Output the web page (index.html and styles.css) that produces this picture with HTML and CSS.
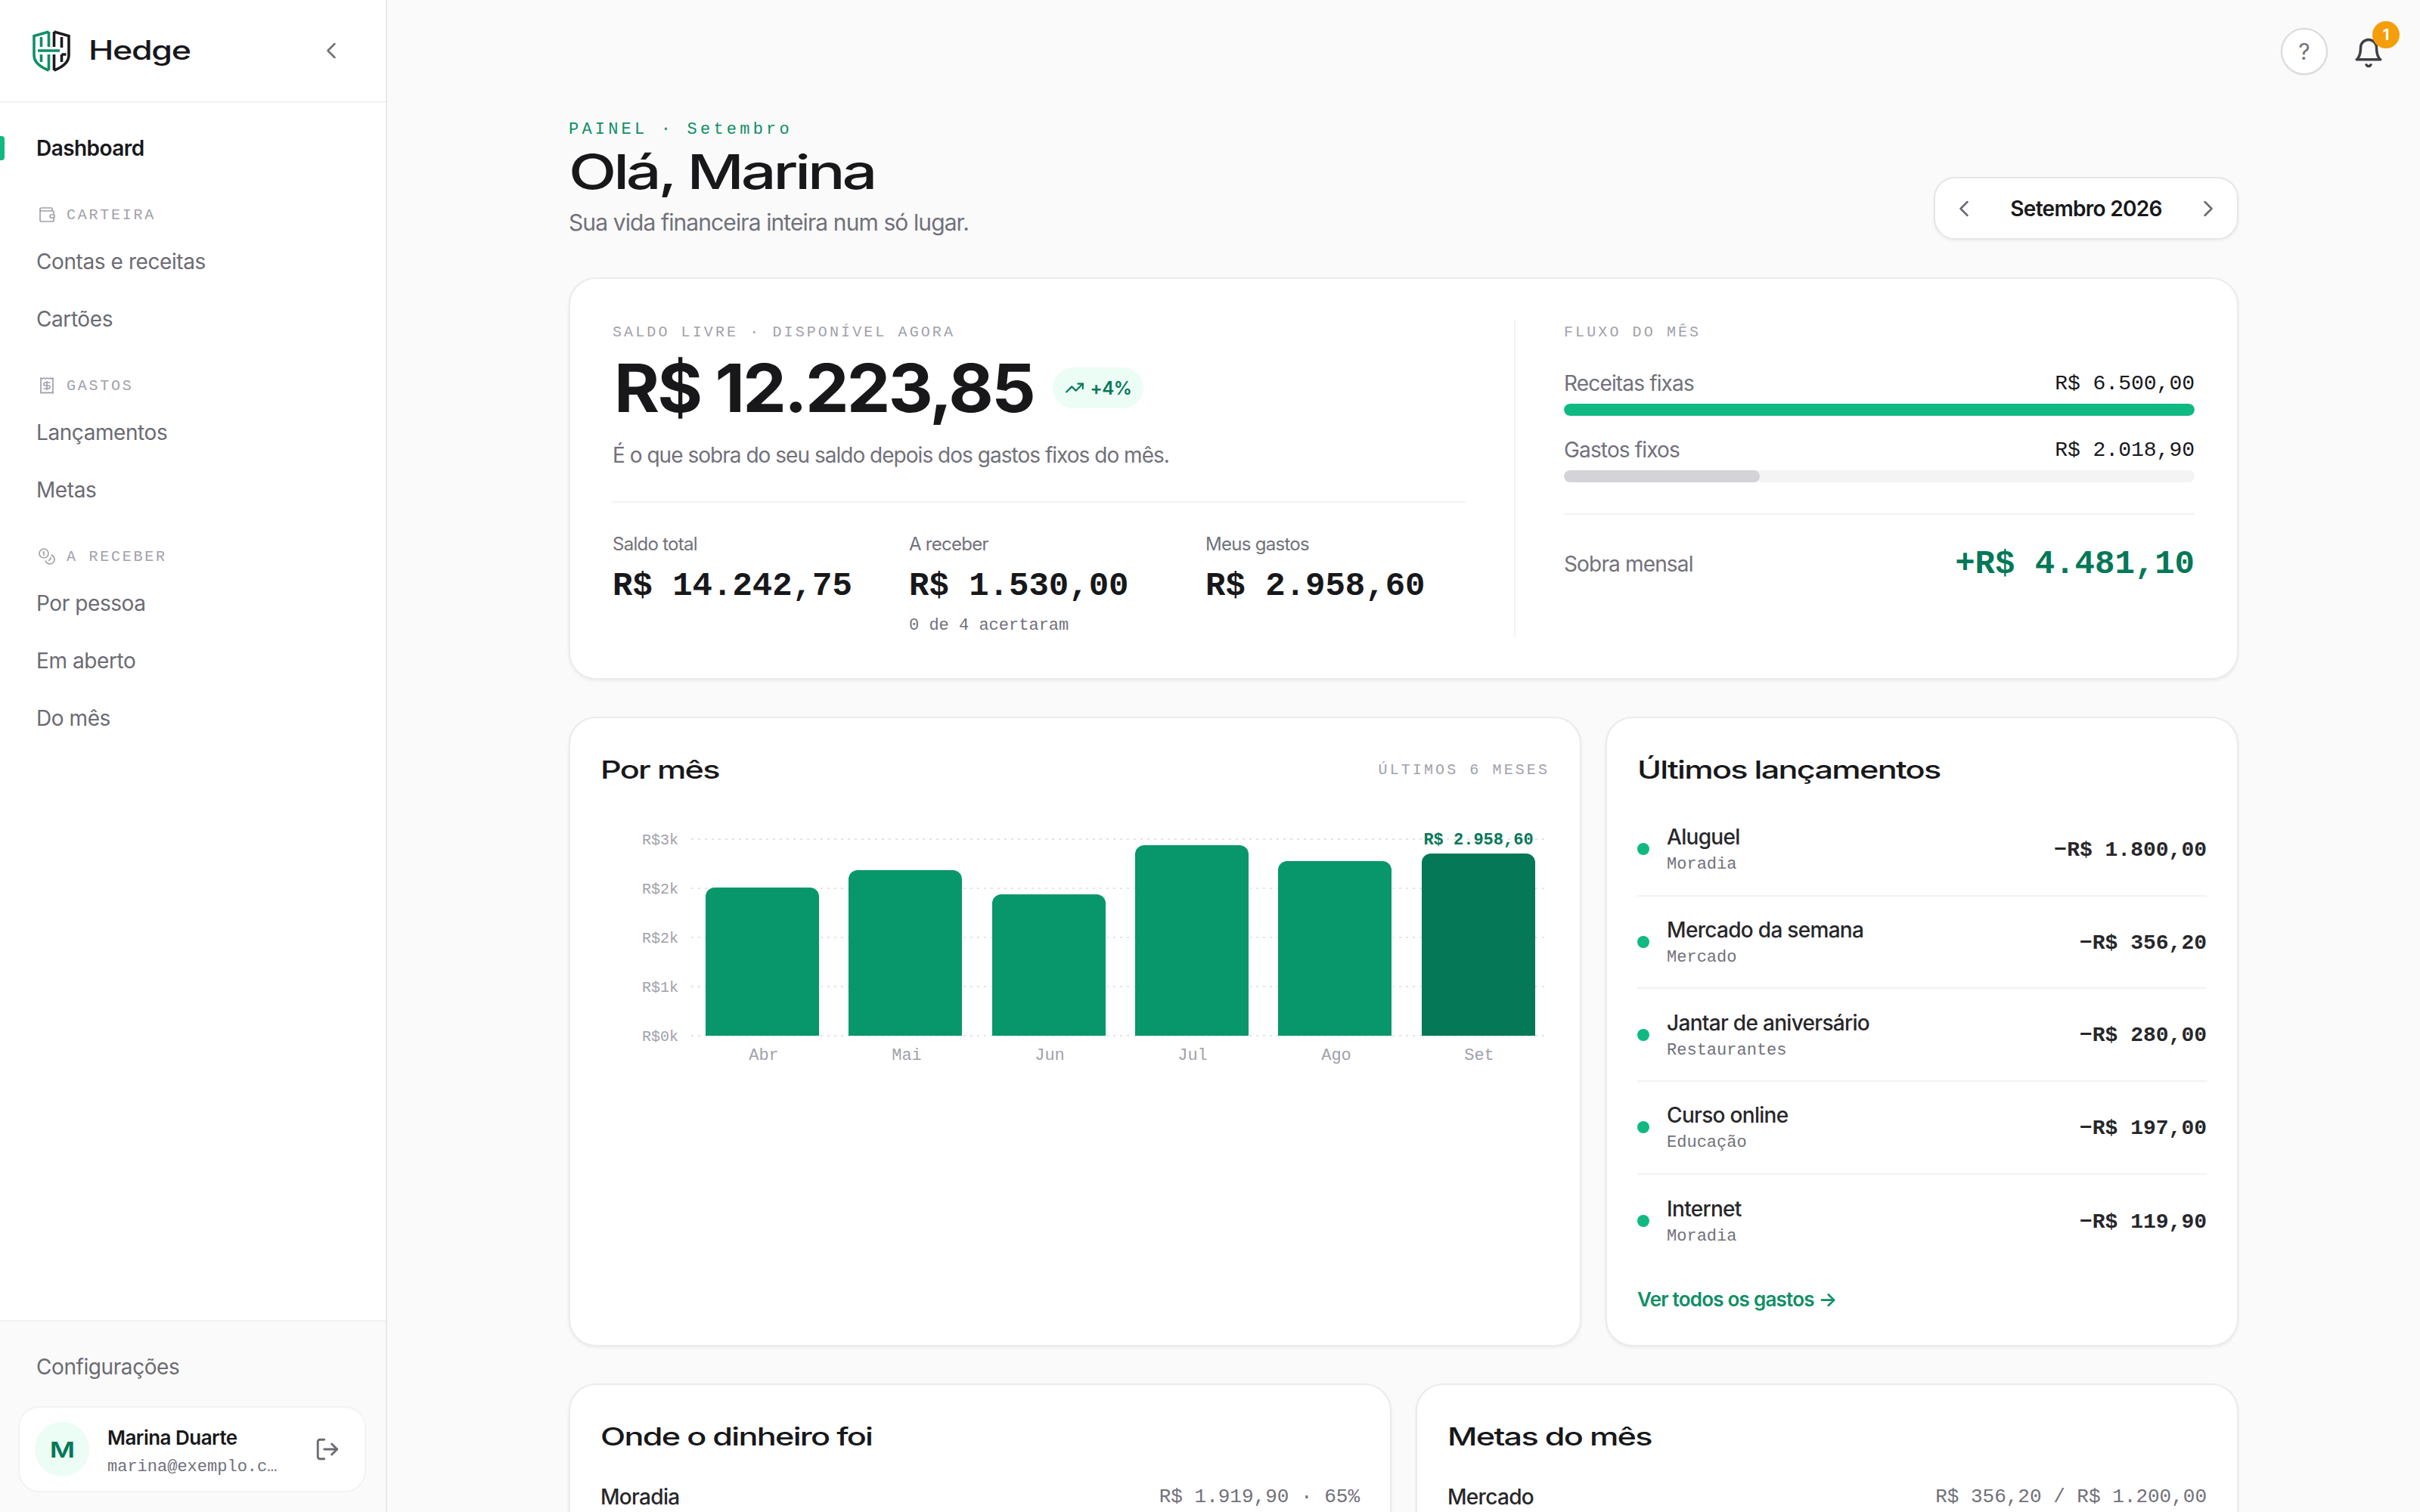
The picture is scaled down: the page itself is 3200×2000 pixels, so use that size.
FILE: index.html
```html
<!DOCTYPE html>
<html lang="pt-BR">
<head>
<meta charset="utf-8">
<title>Hedge</title>
<link rel="stylesheet" href="styles.css">
</head>
<body>
<aside class="sidebar">
  <div class="brand">
    <svg class="logo" viewBox="0 0 52 56" fill="none">
      <g stroke="#0f8f66" stroke-width="3.6">
        <path d="M22.500 3 3 8.500V34c0 10 9 16 19.500 20"/>
        <path d="M22.500 3v20M12.500 10v13M12.500 33v10M22.500 33v21M8 28h29"/>
      </g>
      <g stroke="#1c1c20" stroke-width="3.6">
        <path d="M29.500 3 49 8.500V34c0 10-9 16-19.500 20"/>
        <path d="M29.500 3v20M29.500 33v21M39.500 10v14M39.500 33v10M39.500 33h6"/>
      </g>
    </svg>
    <span class="brand-name disp">Hedge</span>
    <svg class="ic collapse" viewBox="0 0 24 24"><path d="m15 18-6-6 6-6"/></svg>
  </div>
  <nav class="nav">
    <a class="item active">Dashboard</a>
    <div class="group">
      <svg class="ic gi" viewBox="0 0 24 24"><path d="M19 7V4a1 1 0 0 0-1-1H5a2 2 0 0 0 0 4h15a1 1 0 0 1 1 1v4h-3a2 2 0 0 0 0 4h3a1 1 0 0 0 1-1v-2a1 1 0 0 0-1-1"/><path d="M3 5v14a2 2 0 0 0 2 2h15a1 1 0 0 0 1-1v-4"/></svg>
      <span>CARTEIRA</span>
    </div>
    <a class="item">Contas e receitas</a>
    <a class="item">Cartões</a>
    <div class="group">
      <svg class="ic gi" viewBox="0 0 24 24"><path d="M4 2v20l2-1 2 1 2-1 2 1 2-1 2 1 2-1 2 1V2l-2 1-2-1-2 1-2-1-2 1-2-1-2 1Z"/><path d="M16 8h-6a2 2 0 1 0 0 4h4a2 2 0 1 1 0 4H8"/><path d="M12 17.500v-11"/></svg>
      <span>GASTOS</span>
    </div>
    <a class="item">Lançamentos</a>
    <a class="item">Metas</a>
    <div class="group">
      <svg class="ic gi" viewBox="0 0 24 24"><circle cx="8" cy="8" r="6"/><path d="M18.090 10.370A6 6 0 1 1 10.340 18"/><path d="M7 6h1v4"/><path d="m16.710 13.880.7.71-2.820 2.820"/></svg>
      <span>A RECEBER</span>
    </div>
    <a class="item">Por pessoa</a>
    <a class="item">Em aberto</a>
    <a class="item">Do mês</a>
  </nav>
  <div class="side-foot">
    <a class="item">Configurações</a>
    <div class="user">
      <div class="avatar"><span class="avatar-m">M</span></div>
      <div class="user-text">
        <div class="user-name">Marina Duarte</div>
        <div class="user-mail">marina@exemplo.c…</div>
      </div>
      <svg class="ic logout" viewBox="0 0 24 24"><path d="M9 21H5a2 2 0 0 1-2-2V5a2 2 0 0 1 2-2h4"/><path d="m16 17 5-5-5-5"/><path d="M21 12H9"/></svg>
    </div>
  </div>
</aside>
<main class="main">
  <div class="topbar">
    <button class="help">?</button>
    <div class="bell">
      <svg class="ic bell-ic" viewBox="0 0 24 24"><path d="M6 8a6 6 0 0 1 12 0c0 7 3 9 3 9H3s3-2 3-9"/><path d="M10.300 21a1.940 1.940 0 0 0 3.400 0"/></svg>
      <span class="badge">1</span>
    </div>
  </div>
  <div class="content">
    <header class="page-head">
      <div class="page-intro">
        <div class="eyebrow">PAINEL · Setembro</div>
        <h1 class="title disp">Olá, Marina</h1>
        <p class="subtitle">Sua vida financeira inteira num só lugar.</p>
      </div>
      <div class="month">
        <svg class="ic chev" viewBox="0 0 24 24"><path d="m15 18-6-6 6-6"/></svg>
        <span class="month-name">Setembro 2026</span>
        <svg class="ic chev" viewBox="0 0 24 24"><path d="m9 18 6-6-6-6"/></svg>
      </div>
    </header>

    <section class="card hero">
      <div class="hero-left">
        <div class="label">SALDO LIVRE · DISPONÍVEL AGORA</div>
        <div class="free-row">
          <span class="free">R$ 12.223,85</span>
          <span class="pill">
            <svg class="ic trend" viewBox="0 0 24 24"><path d="M22 7 13.500 15.500l-5-5L2 17"/><path d="M16 7h6v6"/></svg>
            +4%
          </span>
        </div>
        <p class="desc">É o que sobra do seu saldo depois dos gastos fixos do mês.</p>
        <div class="stats">
          <div class="stat">
            <div class="stat-label">Saldo total</div>
            <div class="stat-val">R$ 14.242,75</div>
          </div>
          <div class="stat">
            <div class="stat-label">A receber</div>
            <div class="stat-val">R$ 1.530,00</div>
            <div class="stat-sub">0 de 4 acertaram</div>
          </div>
          <div class="stat">
            <div class="stat-label">Meus gastos</div>
            <div class="stat-val">R$ 2.958,60</div>
          </div>
        </div>
      </div>
      <div class="hero-right">
        <div class="label">FLUXO DO MÊS</div>
        <div class="flow-row first"><span class="flow-name">Receitas fixas</span><span class="flow-val">R$ 6.500,00</span></div>
        <div class="track"><div class="fill green full"></div></div>
        <div class="flow-row"><span class="flow-name">Gastos fixos</span><span class="flow-val">R$ 2.018,90</span></div>
        <div class="track"><div class="fill grey part"></div></div>
        <div class="net"><span class="flow-name">Sobra mensal</span><span class="net-val">+R$ 4.481,10</span></div>
      </div>
    </section>

    <div class="row-two">
      <section class="card panel">
        <div class="panel-head">
          <h2 class="panel-title disp">Por mês</h2>
          <span class="label">ÚLTIMOS 6 MESES</span>
        </div>
        <svg class="chart" viewBox="0 0 1254 340">
          <g class="grid">
            <line x1="120" x2="1253" y1="30" y2="30"/>
            <line x1="120" x2="1253" y1="95" y2="95"/>
            <line x1="120" x2="1253" y1="160" y2="160"/>
            <line x1="120" x2="1253" y1="225" y2="225"/>
            <line x1="120" x2="1253" y1="290" y2="290"/>
          </g>
          <g class="ylab">
            <text x="103" y="37">R$3k</text>
            <text x="103" y="102">R$2k</text>
            <text x="103" y="167">R$2k</text>
            <text x="103" y="232">R$1k</text>
            <text x="103" y="297">R$0k</text>
          </g>
          <g class="bars">
            <path d="M139 290V106a12 12 0 0 1 12-12h126a12 12 0 0 1 12 12V290Z"/>
            <path d="M328 290V83a12 12 0 0 1 12-12h126a12 12 0 0 1 12 12V290Z"/>
            <path d="M518 290V115a12 12 0 0 1 12-12h126a12 12 0 0 1 12 12V290Z"/>
            <path d="M707 290V50a12 12 0 0 1 12-12h126a12 12 0 0 1 12 12V290Z"/>
            <path d="M896 290V71a12 12 0 0 1 12-12h126a12 12 0 0 1 12 12V290Z"/>
            <path class="bar-now" d="M1086 290V61a12 12 0 0 1 12-12h126a12 12 0 0 1 12 12V290Z"/>
          </g>
          <g class="xlab">
            <text x="216" y="322">Abr</text>
            <text x="405" y="322">Mai</text>
            <text x="594" y="322">Jun</text>
            <text x="783" y="322">Jul</text>
            <text x="973" y="322">Ago</text>
            <text x="1162" y="322">Set</text>
          </g>
          <text class="bar-val" x="1161" y="37">R$ 2.958,60</text>
        </svg>
      </section>

      <section class="card panel">
        <div class="panel-head">
          <h2 class="panel-title disp">Últimos lançamentos</h2>
        </div>
        <ul class="tx-list">
          <li class="tx"><i class="dot"></i><div class="tx-text"><div class="tx-name">Aluguel</div><div class="tx-cat">Moradia</div></div><span class="tx-val">−R$ 1.800,00</span></li>
          <li class="tx"><i class="dot"></i><div class="tx-text"><div class="tx-name">Mercado da semana</div><div class="tx-cat">Mercado</div></div><span class="tx-val">−R$ 356,20</span></li>
          <li class="tx"><i class="dot"></i><div class="tx-text"><div class="tx-name">Jantar de aniversário</div><div class="tx-cat">Restaurantes</div></div><span class="tx-val">−R$ 280,00</span></li>
          <li class="tx"><i class="dot"></i><div class="tx-text"><div class="tx-name">Curso online</div><div class="tx-cat">Educação</div></div><span class="tx-val">−R$ 197,00</span></li>
          <li class="tx"><i class="dot"></i><div class="tx-text"><div class="tx-name">Internet</div><div class="tx-cat">Moradia</div></div><span class="tx-val">−R$ 119,90</span></li>
        </ul>
        <a class="see-all">Ver todos os gastos →</a>
      </section>
    </div>

    <div class="row-three">
      <section class="card panel">
        <div class="panel-head"><h2 class="panel-title disp">Onde o dinheiro foi</h2></div>
        <div class="meter-row"><span class="meter-name">Moradia</span><span class="meter-val">R$ 1.919,90 · 65%</span></div>
      </section>
      <section class="card panel">
        <div class="panel-head"><h2 class="panel-title disp">Metas do mês</h2></div>
        <div class="meter-row"><span class="meter-name">Mercado</span><span class="meter-val">R$ 356,20 / R$ 1.200,00</span></div>
      </section>
    </div>
  </div>
</main>
</body>
</html>
```
FILE: styles.css
```css
* { box-sizing: border-box; }
html, body { height: 100%; }
body {
  margin: 0;
  display: flex;
  height: 100vh;
  overflow: hidden;
  background: #fafafa;
  color: #18181b;
  font-family: Inter, "Liberation Sans", sans-serif;
}
h1, h2, p, ul { margin: 0; padding: 0; }
.ic { fill: none; stroke: currentColor; stroke-width: 2; stroke-linecap: round; stroke-linejoin: round; flex: none; }
.disp { display: inline-block; transform-origin: left center; font-weight: 550; }

/* sidebar */
.sidebar {
  width: 512px;
  flex: none;
  display: flex;
  flex-direction: column;
  background: #fff;
  border-right: 2px solid #e9e9ec;
}
.brand {
  height: 136px;
  flex: none;
  display: flex;
  align-items: center;
  padding-left: 42px;
  border-bottom: 2px solid #f2f2f3;
}
.logo { width: 52px; height: 56px; flex: none; }
.brand-name {
  margin-left: 23px;
  margin-top: -2px;
  font-size: 35px;
  letter-spacing: -0.03em;
  transform: scaleX(1.28);
  color: #18181b;
}
.collapse { width: 36px; height: 36px; color: #71717a; margin-left: auto; margin-right: 54px; stroke-width: 1.700; }
.nav { padding-top: 22px; }
.item {
  display: flex;
  align-items: center;
  height: 76px;
  padding-left: 48px;
  font-size: 28px;
  letter-spacing: -0.015em;
  color: #6b6b73;
  position: relative;
}
.item.active { color: #18181b; font-weight: 600; letter-spacing: -0.02em; }
.item.active::before {
  content: "";
  position: absolute;
  left: 0;
  top: 22px;
  width: 6px;
  height: 32px;
  border-radius: 0 4px 4px 0;
  background: #10b981;
}
.group {
  display: flex;
  align-items: center;
  gap: 14px;
  height: 26px;
  margin: 37px 0 11px;
  padding-left: 50px;
  font-family: "Liberation Mono", monospace;
  font-size: 20px;
  letter-spacing: 2.750px;
  color: #a1a1aa;
  white-space: pre;
}
.gi { width: 24px; height: 24px; stroke-width: 1.700; }
.side-foot {
  margin-top: auto;
  padding-top: 22px;
  background: #fafafa;
  border-top: 2px solid #f2f2f3;
}
.user {
  display: flex;
  align-items: center;
  height: 114px;
  margin: 14px 26px 26px 24px;
  padding: 0 32px 0 20px;
  background: #fff;
  border: 2px solid #f2f2f3;
  border-radius: 28px;
}
.avatar {
  width: 72px;
  height: 72px;
  flex: none;
  border-radius: 50%;
  background: #ecfdf5;
  display: flex;
  align-items: center;
  justify-content: center;
}
.avatar-m { font-weight: 600; font-size: 29px; color: #047857; transform: scaleX(1.25); }
.user-text { margin-left: 24px; min-width: 0; padding-top: 10px; }
.user-name { font-size: 26px; font-weight: 600; letter-spacing: -0.02em; line-height: 36px; }
.user-mail { margin-top: 2px; font-family: "Liberation Mono", monospace; font-size: 22px; line-height: 38px; color: #71717a; }
.logout { width: 34px; height: 34px; margin-left: auto; color: #6b6b73; }

/* main */
.main { flex: 1; min-width: 0; overflow: hidden; }
.topbar {
  height: 99px;
  padding: 37px 50px 0 0;
  display: flex;
  justify-content: flex-end;
  gap: 36px;
}
.help {
  width: 62px;
  height: 62px;
  border-radius: 50%;
  border: 2px solid #d9d9dd;
  background: #fff;
  box-shadow: 0 1px 2px rgba(0,0,0,.05);
  color: #71717a;
  font-family: Inter, sans-serif;
  font-size: 30px;
  padding: 0;
}
.bell { position: relative; width: 36px; height: 62px; margin-top: 12px; }
.bell-ic { width: 42px; height: 42px; margin-left: -3px; color: #3f3f46; }
.badge {
  position: absolute;
  left: 23px;
  top: -21px;
  width: 36px;
  height: 36px;
  border-radius: 50%;
  background: #f59e0b;
  color: #fff;
  font-size: 20px;
  font-weight: 700;
  display: flex;
  align-items: center;
  justify-content: center;
}
.content { padding: 55px 240px 0 240px; }
.page-head { display: flex; justify-content: space-between; align-items: flex-end; height: 163px; }
.page-intro { padding-bottom: 3px; }
.eyebrow {
  font-family: "Liberation Mono", monospace;
  font-size: 22px;
  line-height: 24px;
  letter-spacing: 4.200px;
  color: #0f8f66;
}
.title {
  display: block;
  font-size: 63px;
  line-height: 72px;
  margin-top: 7px;
  letter-spacing: -0.05em;
  transform: scaleX(1.31);
  white-space: nowrap;
  color: #18181b;
}
.subtitle { margin-top: 11px; font-size: 30px; line-height: 40px; letter-spacing: -0.03em; color: #71717a; }
.month {
  width: 403px;
  height: 83px;
  display: flex;
  align-items: center;
  justify-content: space-between;
  padding: 0 20px;
  background: #fff;
  border: 2px solid #e6e6e9;
  border-radius: 28px;
  box-shadow: 0 2px 4px rgba(0,0,0,.05);
}
.month-name { font-size: 28px; font-weight: 600; letter-spacing: -0.025em; }
.chev { width: 36px; height: 36px; color: #6b6b73; stroke-width: 1.700; }

.card {
  background: #fff;
  border: 2px solid #ebebee;
  border-radius: 36px;
  box-shadow: 0 2px 4px rgba(0,0,0,.06);
}
.hero {
  margin-top: 50px;
  height: 532px;
  padding: 54px 56px 54px 56px;
  display: flex;
  gap: 64px;
}
.label {
  font-family: "Liberation Mono", monospace;
  font-size: 20px;
  line-height: 34px;
  height: 32px;
  letter-spacing: 3.100px;
  color: #a1a1aa;
  white-space: nowrap;
}
.hero-left { width: 1128px; flex: none; }
.free-row { display: flex; align-items: center; gap: 46px; height: 100px; margin-top: 8px; }
.free {
  display: inline-block;
  transform: scaleX(1.04);
  transform-origin: left center;
  font-size: 88px;
  font-weight: 700;
  letter-spacing: -0.03em;
  margin-left: 2px;
  white-space: nowrap;
}
.pill {
  display: flex;
  align-items: center;
  gap: 8px;
  height: 54px;
  padding: 0 16px;
  border-radius: 27px;
  background: #ecfdf5;
  color: #047857;
  font-size: 24px;
  font-weight: 600;
  letter-spacing: -0.02em;
}
.trend { width: 26px; height: 26px; }
.desc { margin-top: 20px; font-size: 28px; line-height: 38px; letter-spacing: -0.035em; color: #71717a; }
.stats {
  margin-top: 42px;
  padding-top: 40px;
  border-top: 2px solid #f2f2f3;
  display: grid;
  grid-template-columns: repeat(3, 392px);
}
.stat-label { font-size: 24px; line-height: 30px; letter-spacing: -0.03em; color: #71717a; }
.stat-val {
  margin-top: 14px;
  font-family: "Liberation Mono", monospace;
  font-size: 44px;
  line-height: 52px;
  font-weight: 700;
  white-space: nowrap;
}
.stat-sub { margin-top: 11px; font-family: "Liberation Mono", monospace; font-size: 22px; line-height: 32px; color: #71717a; }
.hero-right { flex: 1; min-width: 0; border-left: 2px solid #f2f2f3; padding-left: 64px; }
.flow-row { display: flex; justify-content: space-between; align-items: center; height: 36px; margin-top: 27px; }
.flow-row.first { margin-top: 34px; }
.flow-name { font-size: 28px; letter-spacing: -0.03em; color: #71717a; }
.flow-val { font-family: "Liberation Mono", monospace; font-size: 28px; color: #18181b; }
.track { height: 16px; margin-top: 9px; border-radius: 8px; background: #f4f4f5; overflow: hidden; }
.fill { height: 100%; border-radius: 8px; }
.fill.green { background: #10b981; }
.fill.grey { background: #d4d4d8; }
.fill.full { width: 100%; }
.fill.part { width: 31.100%; }
.net {
  margin-top: 41px;
  padding-top: 35px;
  border-top: 2px solid #f2f2f3;
  display: flex;
  justify-content: space-between;
  align-items: center;
  height: 96px;
}
.net-val { font-family: "Liberation Mono", monospace; font-size: 44px; font-weight: 700; color: #047857; }

.row-two { display: grid; grid-template-columns: 1.6fr 1fr; gap: 32px; margin-top: 49px; height: 833px; }
.row-three { display: grid; grid-template-columns: 1fr 1fr; gap: 32px; margin-top: 49px; height: 400px; }
.panel { padding: 46px 40px 0 40px; min-width: 0; }
.panel-head { display: flex; justify-content: space-between; align-items: center; height: 44px; }
.panel-title { font-size: 33px; letter-spacing: -0.04em; transform: scaleX(1.31); white-space: nowrap; color: #18181b; }
.chart { display: block; width: 1254px; height: 340px; margin-top: 40px; overflow: visible; }
.grid line { stroke: #e4e4e7; stroke-width: 2; stroke-dasharray: 3 6; }
.ylab text { font-family: "Liberation Mono", monospace; font-size: 20px; fill: #a1a1aa; text-anchor: end; }
.xlab text { font-family: "Liberation Mono", monospace; font-size: 22px; fill: #a1a1aa; text-anchor: middle; }
.bars path { fill: #07976a; }
.bars .bar-now { fill: #047857; }
.bar-val { font-family: "Liberation Mono", monospace; font-size: 22px; font-weight: 700; fill: #047857; text-anchor: middle; }
.tx-list { list-style: none; margin-top: 23px; }
.tx {
  display: flex;
  align-items: center;
  height: 122.700px;
  border-bottom: 2px solid #f2f2f3;
}
.tx:last-child { border-bottom: 0; }
.dot { width: 16px; height: 16px; flex: none; border-radius: 50%; background: #10b981; }
.tx-text { margin-left: 23px; padding-top: 6px; }
.tx-name { font-size: 28px; line-height: 36px; font-weight: 500; letter-spacing: -0.025em; color: #27272a; }
.tx-cat { font-family: "Liberation Mono", monospace; font-size: 22px; line-height: 38px; color: #71717a; }
.tx-val { margin-left: auto; padding-top: 2px; font-family: "Liberation Mono", monospace; font-size: 28px; font-weight: 700; color: #27272a; }
.see-all { display: block; margin-top: 25px; font-size: 26px; line-height: 36px; font-weight: 600; letter-spacing: -0.03em; color: #0f8f66; }
.meter-row { display: flex; justify-content: space-between; align-items: center; height: 36px; margin-top: 40px; }
.meter-name { font-size: 28px; font-weight: 500; letter-spacing: -0.025em; color: #27272a; }
.meter-val { font-family: "Liberation Mono", monospace; font-size: 26px; color: #71717a; }
```
